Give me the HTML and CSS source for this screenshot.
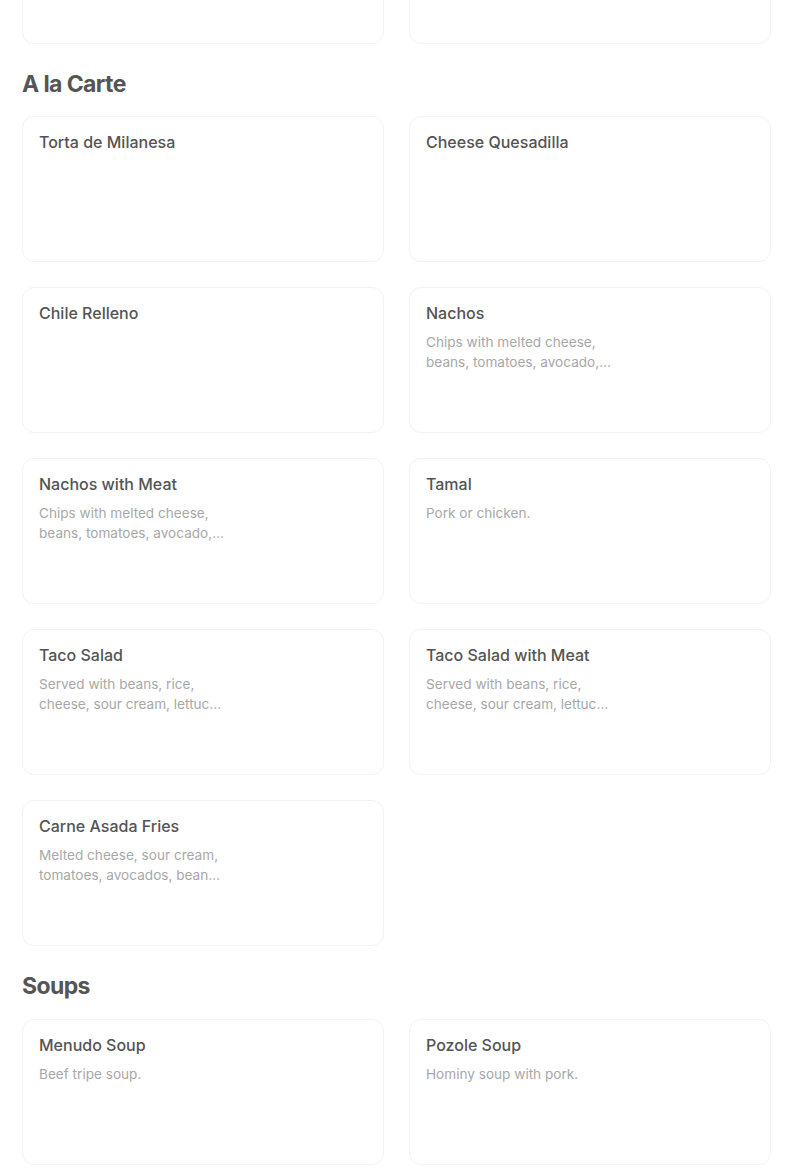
FILE: index.html
```html
<!DOCTYPE html>
<html>
<head>
<meta charset="utf-8">
<link rel="stylesheet" href="styles.css">
</head>
<body>
<div class="page">
  <div class="grid grid-top">
    <div class="card"></div>
    <div class="card"></div>
  </div>

  <h2 class="section-title">A la Carte</h2>
  <div class="grid">
    <div class="card"><div class="item-title">Torta de Milanesa</div></div>
    <div class="card"><div class="item-title">Cheese Quesadilla</div></div>
    <div class="card"><div class="item-title">Chile Relleno</div></div>
    <div class="card"><div class="item-title">Nachos</div><div class="item-desc">Chips with melted cheese, beans, tomatoes, avocado, sour cream and jalapeños.</div></div>
    <div class="card"><div class="item-title">Nachos with Meat</div><div class="item-desc">Chips with melted cheese, beans, tomatoes, avocado, sour cream and your choice of meat.</div></div>
    <div class="card"><div class="item-title">Tamal</div><div class="item-desc">Pork or chicken.</div></div>
    <div class="card"><div class="item-title">Taco Salad</div><div class="item-desc">Served with beans, rice, cheese, sour cream, lettuce and tomatoes.</div></div>
    <div class="card"><div class="item-title">Taco Salad with Meat</div><div class="item-desc">Served with beans, rice, cheese, sour cream, lettuce, tomatoes and meat.</div></div>
    <div class="card"><div class="item-title">Carne Asada Fries</div><div class="item-desc">Melted cheese, sour cream, tomatoes, avocados, beans and carne asada.</div></div>
  </div>

  <h2 class="section-title section-title-next">Soups</h2>
  <div class="grid">
    <div class="card"><div class="item-title">Menudo Soup</div><div class="item-desc">Beef tripe soup.</div></div>
    <div class="card"><div class="item-title">Pozole Soup</div><div class="item-desc">Hominy soup with pork.</div></div>
  </div>
</div>
</body>
</html>
```

FILE: styles.css
```css
html, body {
  margin: 0;
  padding: 0;
  background: #ffffff;
}

.page {
  width: 749px;
  padding-left: 22px;
  font-family: "Inter", "Liberation Sans", sans-serif;
}

.grid {
  display: grid;
  grid-template-columns: 1fr 1fr;
  column-gap: 25px;
  row-gap: 25px;
}

.grid-top {
  margin-top: -102px;
}

.card {
  box-sizing: border-box;
  height: 146px;
  border: 1px solid #f2f2f2;
  border-radius: 12px;
  padding: 13px 16px;
  background: #fff;
}

.section-title {
  margin: 24px 0 16px 0;
  font-size: 23px;
  line-height: 32px;
  font-weight: 700;
  color: #555555;
  letter-spacing: -0.6px;
}

.section-title-next {
  margin-bottom: 17px;
}

.item-title {
  font-size: 16px;
  line-height: 24px;
  font-weight: 500;
  color: #545454;
}

.item-desc {
  margin-top: 7px;
  width: 186px;
  font-size: 13.6px;
  line-height: 20px;
  color: #a8a8a8;
  display: -webkit-box;
  -webkit-line-clamp: 2;
  -webkit-box-orient: vertical;
  overflow: hidden;
}
```
